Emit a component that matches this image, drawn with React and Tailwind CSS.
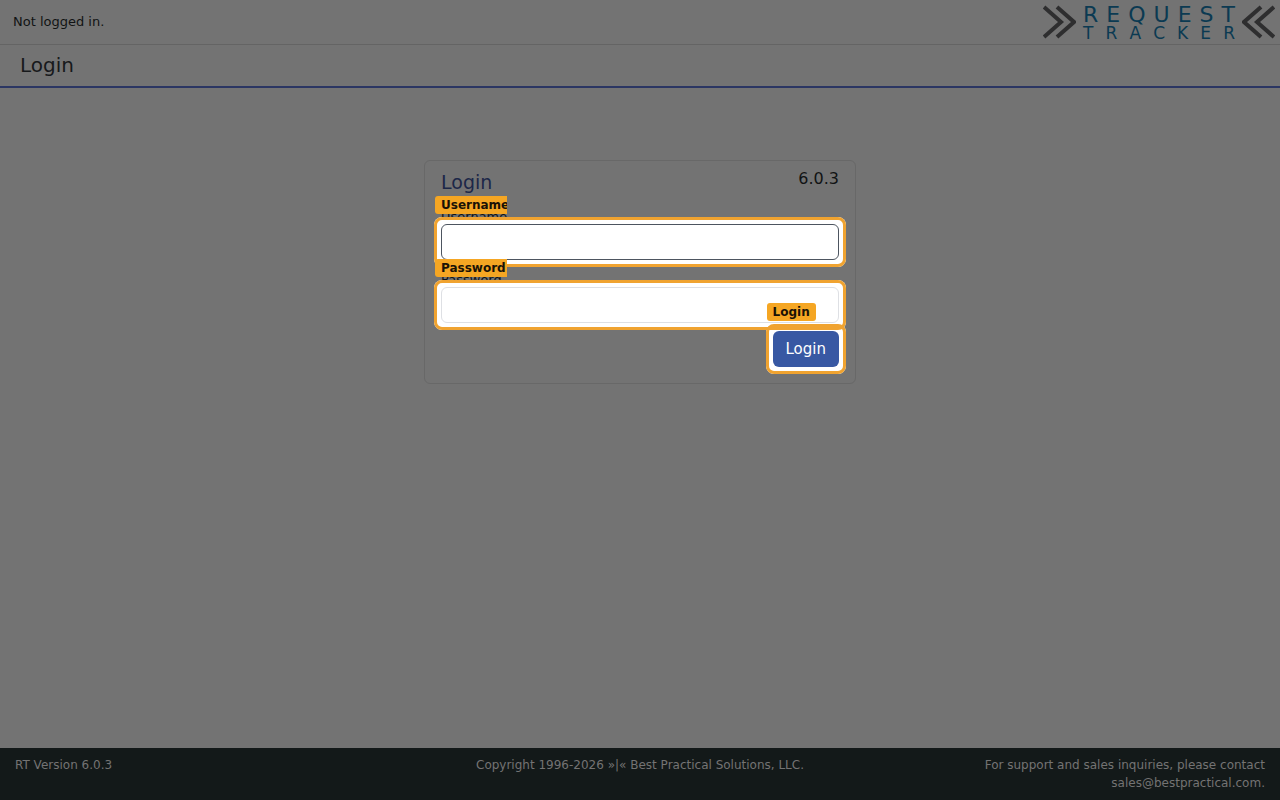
import React from "react";

function Highlight({ children, className = "" }) {
  return (
    <div className={`relative rounded-lg bg-white p-[7px] ${className}`}>
      {children}
      <span className="pointer-events-none absolute inset-0 z-10 rounded-lg border-3 border-[#f0a330]" />
    </div>
  );
}

function Field({ id, label, type, inputClass }) {
  return (
    <div>
      <label htmlFor={id} className="relative block h-5 w-[66px] text-[13px] leading-[22px] text-[#111314]">
        {label}
        <span
          aria-hidden="true"
          className="absolute -top-2.5 -left-1.5 z-20 h-[18px] w-[72px] overflow-hidden rounded-l-[3px] bg-[#f5a623] pl-1.5 text-xs leading-[18px] font-bold whitespace-nowrap text-[#1a1206]"
        >
          {label}
        </span>
      </label>
      <Highlight className="-mx-[7px] -mt-[9px]">
        <input
          id={id}
          name={id}
          type={type}
          className={`block h-9 w-full rounded-md border bg-white px-3 text-[15px] text-gray-900 outline-none ${inputClass}`}
        />
      </Highlight>
    </div>
  );
}

function LogoWord({ text, className }) {
  return (
    <span aria-label={text} role="img" className={`flex justify-between ${className}`}>
      {text.split("").map((c, i) => (
        <span key={i}>{c}</span>
      ))}
    </span>
  );
}

function Logo() {
  return (
    <a href="#" className="flex items-center gap-[7px] text-[#0b3a52]">
      <svg width="33" height="34" viewBox="0 0 33 34" fill="none" stroke="#2e2e2f" strokeWidth="4">
        <path d="M1 2 L18 17 L1 32 M14 2 L31 17 L14 32" />
      </svg>
      <span className="flex w-[152px] flex-col gap-px pt-0.5">
        <LogoWord text="REQUEST" className="text-[22px] leading-[18px]" />
        <LogoWord text="TRACKER" className="text-[17px] leading-4" />
      </span>
      <svg width="33" height="34" viewBox="0 0 33 34" fill="none" stroke="#2e2e2f" strokeWidth="4">
        <path d="M32 2 L15 17 L32 32 M19 2 L2 17 L19 32" />
      </svg>
    </a>
  );
}

export default function App() {
  return (
    <div className="flex min-h-screen flex-col bg-[#737373] font-['DejaVu_Sans',sans-serif] text-[#111314]">
      <header>
        <div className="flex h-[45px] items-center justify-between border-b border-[#646464] pr-[5px] pl-[13px]">
          <span className="text-[13px] leading-5">Not logged in.</span>
          <Logo />
        </div>
        <div className="flex h-[43px] items-start border-b-2 border-[#2b3663] px-5 pt-1.5">
          <h1 className="text-xl leading-7 text-[#17191b]">Login</h1>
        </div>
      </header>

      <main className="flex-1 px-4 pt-[72px]">
        <form
          onSubmit={(e) => e.preventDefault()}
          className="mx-auto max-w-[432px] rounded-md border border-[#686868] px-4 pt-2 pb-[9px]"
        >
          <div className="flex h-[37px] items-start justify-between">
            <h2 className="text-[19px] leading-[26px] text-[#1c2748]">Login</h2>
            <span className="text-base leading-5">6.0.3</span>
          </div>
          <div className="flex flex-col gap-0.5">
            <Field id="username" label="Username" type="text" inputClass="border-[#4d5560]" />
            <Field id="password" label="Password" type="password" inputClass="border-[#dee0e4]" />
          </div>
          <div className="-mt-1.5 -mr-[7px] flex justify-end">
            <Highlight>
              <button
                type="submit"
                className="block h-9 rounded-md bg-[#3858a3] px-[13px] text-[15px] leading-5 text-white"
              >
                Login
              </button>
              <span
                aria-hidden="true"
                className="absolute -top-[21px] left-px z-20 h-[18px] rounded-[3px] bg-[#f5a623] px-1.5 text-xs leading-[18px] font-bold text-[#1a1206]"
              >
                Login
              </span>
            </Highlight>
          </div>
        </form>
      </main>

      <footer className="grid grid-cols-3 bg-[#131919] px-[15px] pt-2 pb-2 text-xs leading-[18px] text-[#737373]">
        <p>RT Version 6.0.3</p>
        <p className="text-center whitespace-nowrap">Copyright 1996-2026 »|« Best Practical Solutions, LLC.</p>
        <p className="text-right">
          For support and sales inquiries, please contact <br />
          <a href="mailto:sales@bestpractical.com">sales@bestpractical.com</a>.
        </p>
      </footer>
    </div>
  );
}
